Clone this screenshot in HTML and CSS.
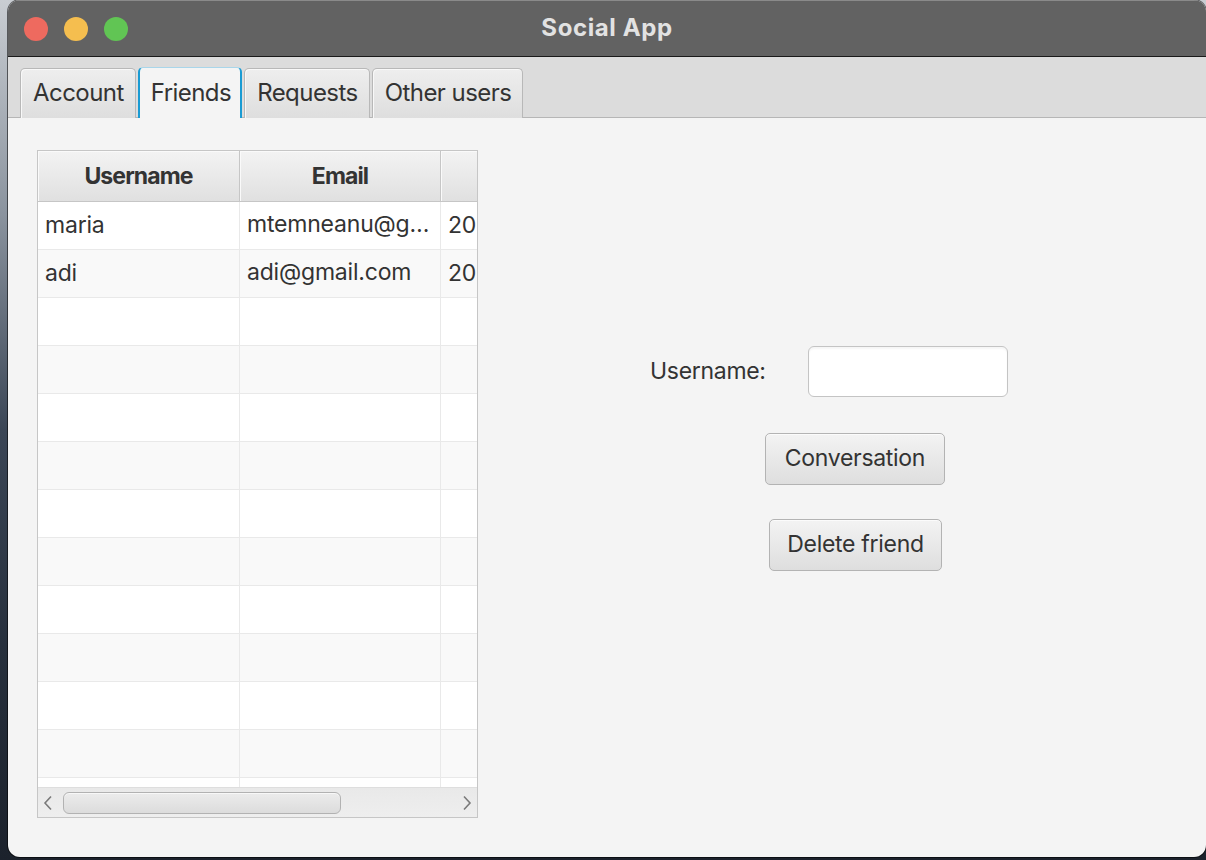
FILE: index.html
```html
<!DOCTYPE html>
<html>
<head>
<meta charset="utf-8">
<link rel="stylesheet" href="styles.css">
</head>
<body>
<div class="desktop">
  <div class="window">
    <div class="titlebar">
      <div class="lights">
        <span class="light red"></span>
        <span class="light yellow"></span>
        <span class="light green"></span>
      </div>
      <div class="title">Social App</div>
    </div>
    <div class="tabbar">
      <div class="tab">Account</div>
      <div class="tab selected">Friends</div>
      <div class="tab">Requests</div>
      <div class="tab">Other users</div>
    </div>
    <div class="content">
      <div class="table">
        <div class="thead">
          <div class="th c1">Username</div>
          <div class="th c2">Email</div>
          <div class="th c3"></div>
        </div>
        <div class="tbody">
          <div class="tr"><div class="td c1">maria</div><div class="td c2">mtemneanu@gmail.com</div><div class="td c3">20</div></div>
          <div class="tr"><div class="td c1">adi</div><div class="td c2">adi@gmail.com</div><div class="td c3">20</div></div>
          <div class="tr"><div class="td c1"></div><div class="td c2"></div><div class="td c3"></div></div>
          <div class="tr"><div class="td c1"></div><div class="td c2"></div><div class="td c3"></div></div>
          <div class="tr"><div class="td c1"></div><div class="td c2"></div><div class="td c3"></div></div>
          <div class="tr"><div class="td c1"></div><div class="td c2"></div><div class="td c3"></div></div>
          <div class="tr"><div class="td c1"></div><div class="td c2"></div><div class="td c3"></div></div>
          <div class="tr"><div class="td c1"></div><div class="td c2"></div><div class="td c3"></div></div>
          <div class="tr"><div class="td c1"></div><div class="td c2"></div><div class="td c3"></div></div>
          <div class="tr"><div class="td c1"></div><div class="td c2"></div><div class="td c3"></div></div>
          <div class="tr"><div class="td c1"></div><div class="td c2"></div><div class="td c3"></div></div>
          <div class="tr"><div class="td c1"></div><div class="td c2"></div><div class="td c3"></div></div>
          <div class="tr"><div class="td c1"></div><div class="td c2"></div><div class="td c3"></div></div>
        </div>
        <div class="hscroll">
          <svg class="arrow" width="10" height="16" viewBox="0 0 10 16"><path d="M8 1.5 L2 8 L8 14.5" fill="none" stroke="#7a7a7a" stroke-width="1.6"/></svg>
          <div class="track"><div class="thumb"></div></div>
          <svg class="arrow" width="10" height="16" viewBox="0 0 10 16"><path d="M2 1.5 L8 8 L2 14.5" fill="none" stroke="#7a7a7a" stroke-width="1.6"/></svg>
        </div>
      </div>
      <div class="side">
        <div class="form-row">
          <label class="label">Username:</label>
          <div class="input"></div>
        </div>
        <button class="btn btn-conv">Conversation</button>
        <button class="btn btn-del">Delete friend</button>
      </div>
    </div>
  </div>
</div>
</body>
</html>
```

FILE: styles.css
```css
* { box-sizing: border-box; }
html, body { margin: 0; padding: 0; }
body {
  width: 1206px;
  height: 860px;
  overflow: hidden;
  background: linear-gradient(180deg, #c9cdd2 0%, #8a939e 25%, #3b4656 50%, #27303d 75%, #1c222c 100%);
  font-family: Inter, "Noto Sans", "Liberation Sans", sans-serif;
}
.desktop { padding-left: 8px; height: 860px; }
.window {
  width: 1198px;
  height: 857px;
  border-radius: 12px;
  overflow: hidden;
  background: #f4f4f4;
  display: flex;
  flex-direction: column;
  box-shadow: 0 0 0 1px rgba(0,0,0,0.55);
}
.titlebar {
  height: 57px;
  flex: none;
  background: #626262;
  border-top: 1px solid #8a8a8a;
  border-bottom: 1px solid #1a1a1a;
  display: flex;
  align-items: center;
  position: relative;
}
.lights { display: flex; gap: 16px; padding-left: 16px; }
.light { width: 24px; height: 24px; border-radius: 50%; display: block; }
.red { background: #ee6a5f; }
.yellow { background: #f5be4f; }
.green { background: #61c554; }
.title {
  position: absolute;
  left: 0; right: 0; top: 0; bottom: 0;
  display: flex; align-items: center; justify-content: center;
  color: #e2e2e2;
  font-weight: 700;
  font-size: 24px;
  letter-spacing: 0.6px;
  padding-bottom: 2px;
}
.tabbar {
  height: 61px;
  flex: none;
  background: #dcdcdc;
  border-bottom: 1px solid #b6b6b6;
  display: flex;
  align-items: flex-end;
  padding-left: 12px;
  gap: 2px;
}
.tab {
  height: 50px;
  margin-bottom: -1px;
  padding: 0 11px 2px 12px;
  border: 1px solid #b8b8b8;
  border-bottom: none;
  border-radius: 5px 5px 0 0;
  background: linear-gradient(180deg, #eeeeee 0%, #dedede 100%);
  box-shadow: inset 1px 1px 0 #f8f8f8;
  color: #333;
  font-size: 24px;
  display: flex;
  align-items: center;
  letter-spacing: -0.55px;
}
.tab.selected {
  background: #f4f4f4;
  border: 1px solid #a9d6ea;
  border-left: 2px solid #1a9bd3;
  border-right: 2px solid #1a9bd3;
  border-bottom: none;
  box-shadow: none;
  height: 51px;
  padding: 0 9px 2px 11px;
}
.content {
  flex: 1;
  display: flex;
  align-items: flex-start;
  padding: 32px 0 0 29px;
}
.table {
  width: 441px;
  height: 668px;
  border: 1px solid #c6c6c6;
  background: #fff;
  display: flex;
  flex-direction: column;
  flex: none;
}
.thead {
  height: 51px;
  display: flex;
  flex: none;
  border-bottom: 1px solid #c6c6c6;
}
.th {
  background: linear-gradient(180deg, #f3f3f3 0%, #e0e0e0 100%);
  box-shadow: inset 1px 1px 0 #fafafa;
  font-weight: 700;
  font-size: 23px;
  color: #333;
  display: flex;
  align-items: center;
  justify-content: center;
  letter-spacing: -0.9px;
  border-right: 1px solid #c6c6c6;
}
.c1 { width: 202px; flex: none; }
.c2 { width: 201px; flex: none; }
.c3 { flex: 1; border-right: none; overflow: hidden; }
.tbody {
  height: 585px;
  overflow: hidden;
  flex: none;
}
.tr {
  height: 48px;
  display: flex;
  border-bottom: 1px solid #e9e9e9;
  background: #fff;
}
.tr:nth-child(even) { background: #f9f9f9; }
.td {
  border-right: 1px solid #e9e9e9;
  font-size: 23px;
  color: #333;
  padding: 0 6px 2px 7px;
  display: flex;
  align-items: center;
  white-space: nowrap;
  overflow: hidden;
  letter-spacing: -0.2px;
}
.td.c2 { display: block; line-height: 45px; text-overflow: ellipsis; }
.td.c3 { border-right: none; padding-left: 7px; padding-right: 0; }
.hscroll {
  height: 30px;
  flex: none;
  background: linear-gradient(180deg, #e9e9e9 0%, #eeeeee 100%);
  border-top: 1px solid #dedede;
  display: flex;
  align-items: center;
  padding: 0 5px 0 5px;
}
.arrow { flex: none; }
.track { flex: 1; height: 22px; padding: 0 110px 0 10px; display: flex; }
.thumb {
  width: 278px;
  height: 22px;
  border: 1px solid #b2b2b2;
  border-radius: 6px;
  background: linear-gradient(180deg, #ececec 0%, #dcdcdc 100%);
  box-shadow: inset 0 1px 0 #f8f8f8;
}
.side {
  display: flex;
  flex-direction: column;
  align-items: flex-start;
  padding-top: 196px;
}
.form-row {
  display: flex;
  align-items: center;
  margin-left: 172px;
  height: 51px;
}
.label {
  font-size: 23px;
  color: #333;
  width: 158px;
  letter-spacing: -0.3px;
  padding-bottom: 2px;
}
.input {
  width: 200px;
  height: 51px;
  background: #fff;
  border: 1px solid #c4c4c4;
  border-radius: 6px;
  box-shadow: inset 0 2px 2px rgba(0,0,0,0.04);
}
.btn {
  font-family: inherit;
  font-size: 23px;
  color: #333;
  height: 52px;
  border: 1px solid #b3b3b3;
  border-radius: 5px;
  background: linear-gradient(180deg, #f3f3f3 0%, #dedede 100%);
  box-shadow: inset 0 1px 0 #fbfbfb;
  padding: 0 0 3px 0;
  letter-spacing: -0.3px;
  margin: 0;
  cursor: default;
}
.btn-conv { width: 180px; margin-left: 287px; margin-top: 36px; }
.btn-del { width: 173px; margin-left: 291px; margin-top: 34px; }
```
